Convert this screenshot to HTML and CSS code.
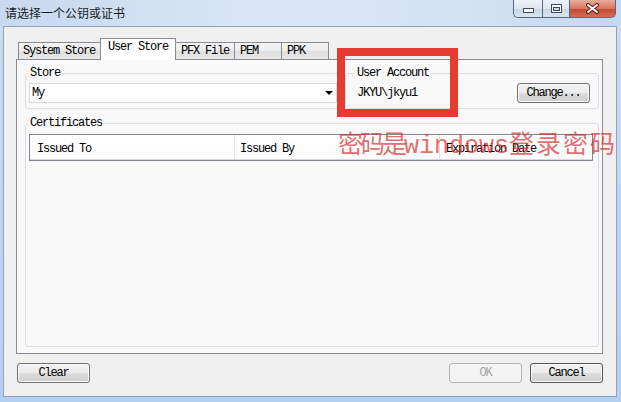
FILE: index.html
```html
<!DOCTYPE html>
<html>
<head>
<meta charset="utf-8">
<title>请选择一个公钥或证书</title>
<link rel="stylesheet" href="styles.css">
</head>
<body>
<div class="window">
  <div class="titlebar">
    <span class="title">请选择一个公钥或证书</span>
    <div class="caption">
      <span class="cbtn min"><svg width="11" height="5" viewBox="0 0 11 5"><rect x="0.5" y="0.5" width="10" height="4" fill="#fff" stroke="#3b4a60"/></svg></span>
      <span class="cbtn max"><svg width="11" height="9" viewBox="0 0 11 9"><rect x="0.5" y="0.5" width="10" height="8" fill="#fff" stroke="#3b4a60"/><rect x="2.5" y="3.5" width="6" height="3" fill="#c9d6e7" stroke="#3b4a60"/></svg></span>
      <span class="cbtn close"><svg width="15" height="11" viewBox="0 0 15 11"><path d="M3 2 L12 9 M12 2 L3 9" stroke="#5a1a10" stroke-width="4" stroke-linecap="round"/><path d="M3 2 L12 9 M12 2 L3 9" stroke="#fff" stroke-width="2" stroke-linecap="round"/></svg></span>
    </div>
  </div>
  <div class="client">
    <div class="tabs">
      <div class="tab first">System Store</div>
      <div class="tab sel">User Store</div>
      <div class="tab">PFX File</div>
      <div class="tab">PEM</div>
      <div class="tab">PPK</div>
    </div>
    <div class="panel">
      <div class="toprow">
        <fieldset class="group store">
          <legend>Store</legend>
          <div class="combo"><span>My</span><span class="arrow"></span></div>
        </fieldset>
        <fieldset class="group account">
          <legend>User Account</legend>
          <div class="acct-row"><span>JKYU\jkyu1</span><button class="btn">Change...</button></div>
        </fieldset>
      </div>
      <fieldset class="group certs">
        <legend>Certificates</legend>
        <div class="list">
          <div class="lhead">
            <span class="col c1">Issued To</span>
            <span class="col c2">Issued By</span>
            <span class="col c3">Expiration Date</span>
          </div>
        </div>
      </fieldset>
    </div>
    <div class="actions">
      <button class="btn">Clear</button>
      <span class="spacer"></span>
      <button class="btn disabled">OK</button>
      <button class="btn cancel">Cancel</button>
    </div>
  </div>
  <div class="redbox"></div>
  <div class="watermark"><span class="wm-a">密码是</span><span class="latin">windows</span><span class="wm-b">登录密码</span></div>
</div>
</body>
</html>
```

FILE: styles.css
```css
* { box-sizing: border-box; }
html, body { margin: 0; padding: 0; }
body {
  width: 621px;
  height: 402px;
  overflow: hidden;
  font-family: "Liberation Mono", "DejaVu Sans Mono", monospace;
  font-size: 12px;
  letter-spacing: -1.2px;
  color: #000;
  background: #b9d1ee;
}
.window {
  position: relative;
  width: 621px;
  height: 402px;
  display: flex;
  flex-direction: column;
  background: linear-gradient(to bottom, #d4e3f4 0px, #c8dbf1 40px, #b6d0ef 100%);
}
.titlebar {
  height: 26px;
  display: flex;
  align-items: flex-start;
  background: linear-gradient(to right, #c6d9f0 0%, #dae7f6 45%, #d3e2f4 75%, #c4d8f0 100%);
}
.title {
  font-family: "Noto Sans CJK SC", sans-serif;
  font-size: 12px;
  letter-spacing: 0;
  line-height: 26px;
  padding-left: 5px;
  color: #1b1b1b;
}
.caption {
  margin-left: auto;
  margin-right: 5px;
  display: flex;
  height: 18px;
}
.cbtn {
  height: 18px;
  border: 1px solid #58677d;
  border-top: none;
  display: flex;
  align-items: center;
  justify-content: center;
  background: linear-gradient(to bottom, #eef3fa 0%, #dde6f1 50%, #c9d7e8 51%, #d8e4f2 100%);
}
.min { width: 29px; border-right: none; border-radius: 0 0 0 5px; padding-top: 4px; }
.max { width: 27px; border-right: none; }
.close {
  width: 47px;
  border-radius: 0 0 5px 0;
  background: linear-gradient(to bottom, #e9ad9b 0%, #d9765f 50%, #c5452d 51%, #d27058 100%);
}
.client {
  flex: 1;
  margin: 0 4px 5px 3px;
  border: 1px solid #8fa3bd;
  background: #f0f0f0;
  display: flex;
  flex-direction: column;
  padding: 11px 13px 13px 12px;
}
.tabs {
  display: flex;
  align-items: flex-end;
  height: 22px;
  padding-left: 2px;
  margin-bottom: -1px;
  position: relative;
  z-index: 1;
}
.tab {
  height: 18px;
  min-width: 48px;
  border: 1px solid #898c95;
  background: linear-gradient(to bottom, #f4f4f4 0%, #ececec 50%, #dfdfdf 51%, #e7e7e7 100%);
  padding: 0 5px;
  line-height: 16px;
  margin-left: -1px;
  white-space: nowrap;
}
.tab.first { margin-left: 0; padding-left: 4px; }
.tab.sel {
  height: 22px;
  background: #fff;
  border-bottom: none;
  padding: 0 7px;
  line-height: 17px;
}
.panel {
  height: 295px;
  border: 1px solid #898c95;
  background: #f9f9f9;
  display: flex;
  flex-direction: column;
  padding: 7px 3px 6px 8px;
}
.toprow {
  display: flex;
  gap: 4px;
}
.group {
  margin: 0;
  min-width: 0;
  border: 1px solid #d5dfe5;
  border-radius: 3px;
}
.group legend {
  padding: 0 2px;
  margin-left: -1px;
  line-height: 13px;
  font-size: 12px;
}
.store {
  width: 316px;
  padding: 3px 3px 5px 3px;
}
.account {
  flex: 1;
  padding: 3px 8px 5px 10px;
}
.combo {
  height: 20px;
  border: 1px solid #dadada;
  background: #fff;
  display: flex;
  align-items: center;
  padding-left: 2px;
}
.arrow {
  margin-left: auto;
  margin-right: 3px;
  width: 0;
  height: 0;
  border-left: 4px solid transparent;
  border-right: 4px solid transparent;
  border-top: 4px solid #000;
}
.acct-row {
  display: flex;
  align-items: center;
  justify-content: space-between;
  padding-left: 1px;
}
.certs {
  flex: 1;
  margin-top: 8px;
  padding: 4px 5px 4px 3px;
  display: flex;
  flex-direction: column;
}
.list {
  flex: 1;
  border: 1px solid #828790;
  background: #fff;
}
.lhead {
  display: flex;
  height: 25px;
  border-bottom: 1px solid #d8d8d8;
  background: linear-gradient(to bottom, #ffffff, #fbfbfb);
}
.col {
  display: flex;
  align-items: center;
  padding-top: 3px;
  white-space: nowrap;
}
.c1 { width: 205px; padding-left: 7px; border-right: 1px solid #e3e3e3; }
.c2 { width: 205px; padding-left: 5px; border-right: 1px solid #e3e3e3; }
.c3 { padding-left: 6px; }
.actions {
  display: flex;
  margin-top: 9px;
  padding-left: 1px;
}
.spacer { flex: 1; }
.btn {
  width: 73px;
  height: 20px;
  padding: 0;
  font-family: "Liberation Mono", "DejaVu Sans Mono", monospace;
  font-size: 12px;
  letter-spacing: -1.2px;
  color: #000;
  border: 1px solid #707070;
  border-radius: 3px;
  background: linear-gradient(to bottom, #f2f2f2 0%, #ebebeb 50%, #dddddd 51%, #cfcfcf 100%);
  box-shadow: inset 0 0 0 1px #fbfbfb;
}
.btn.disabled {
  color: #a3a3a3;
  border-color: #b5b5b5;
  background: #f4f4f4;
  box-shadow: none;
}
.btn.cancel {
  margin-left: 8px;
  border-color: #555;
}
.redbox {
  position: absolute;
  left: 337px;
  top: 48px;
  width: 121px;
  height: 69px;
  border: 8px solid #e53b31;
}
.watermark {
  position: absolute;
  left: 338px;
  top: 130px;
  font-family: "Noto Sans CJK SC", sans-serif;
  font-size: 25px;
  line-height: 24px;
  letter-spacing: 0;
  white-space: nowrap;
  color: rgba(215, 45, 45, 0.7);
}
.wm-a { letter-spacing: -3px; }
.wm-b { letter-spacing: 2px; }
.latin { font-family: "Liberation Mono", monospace; }
```
